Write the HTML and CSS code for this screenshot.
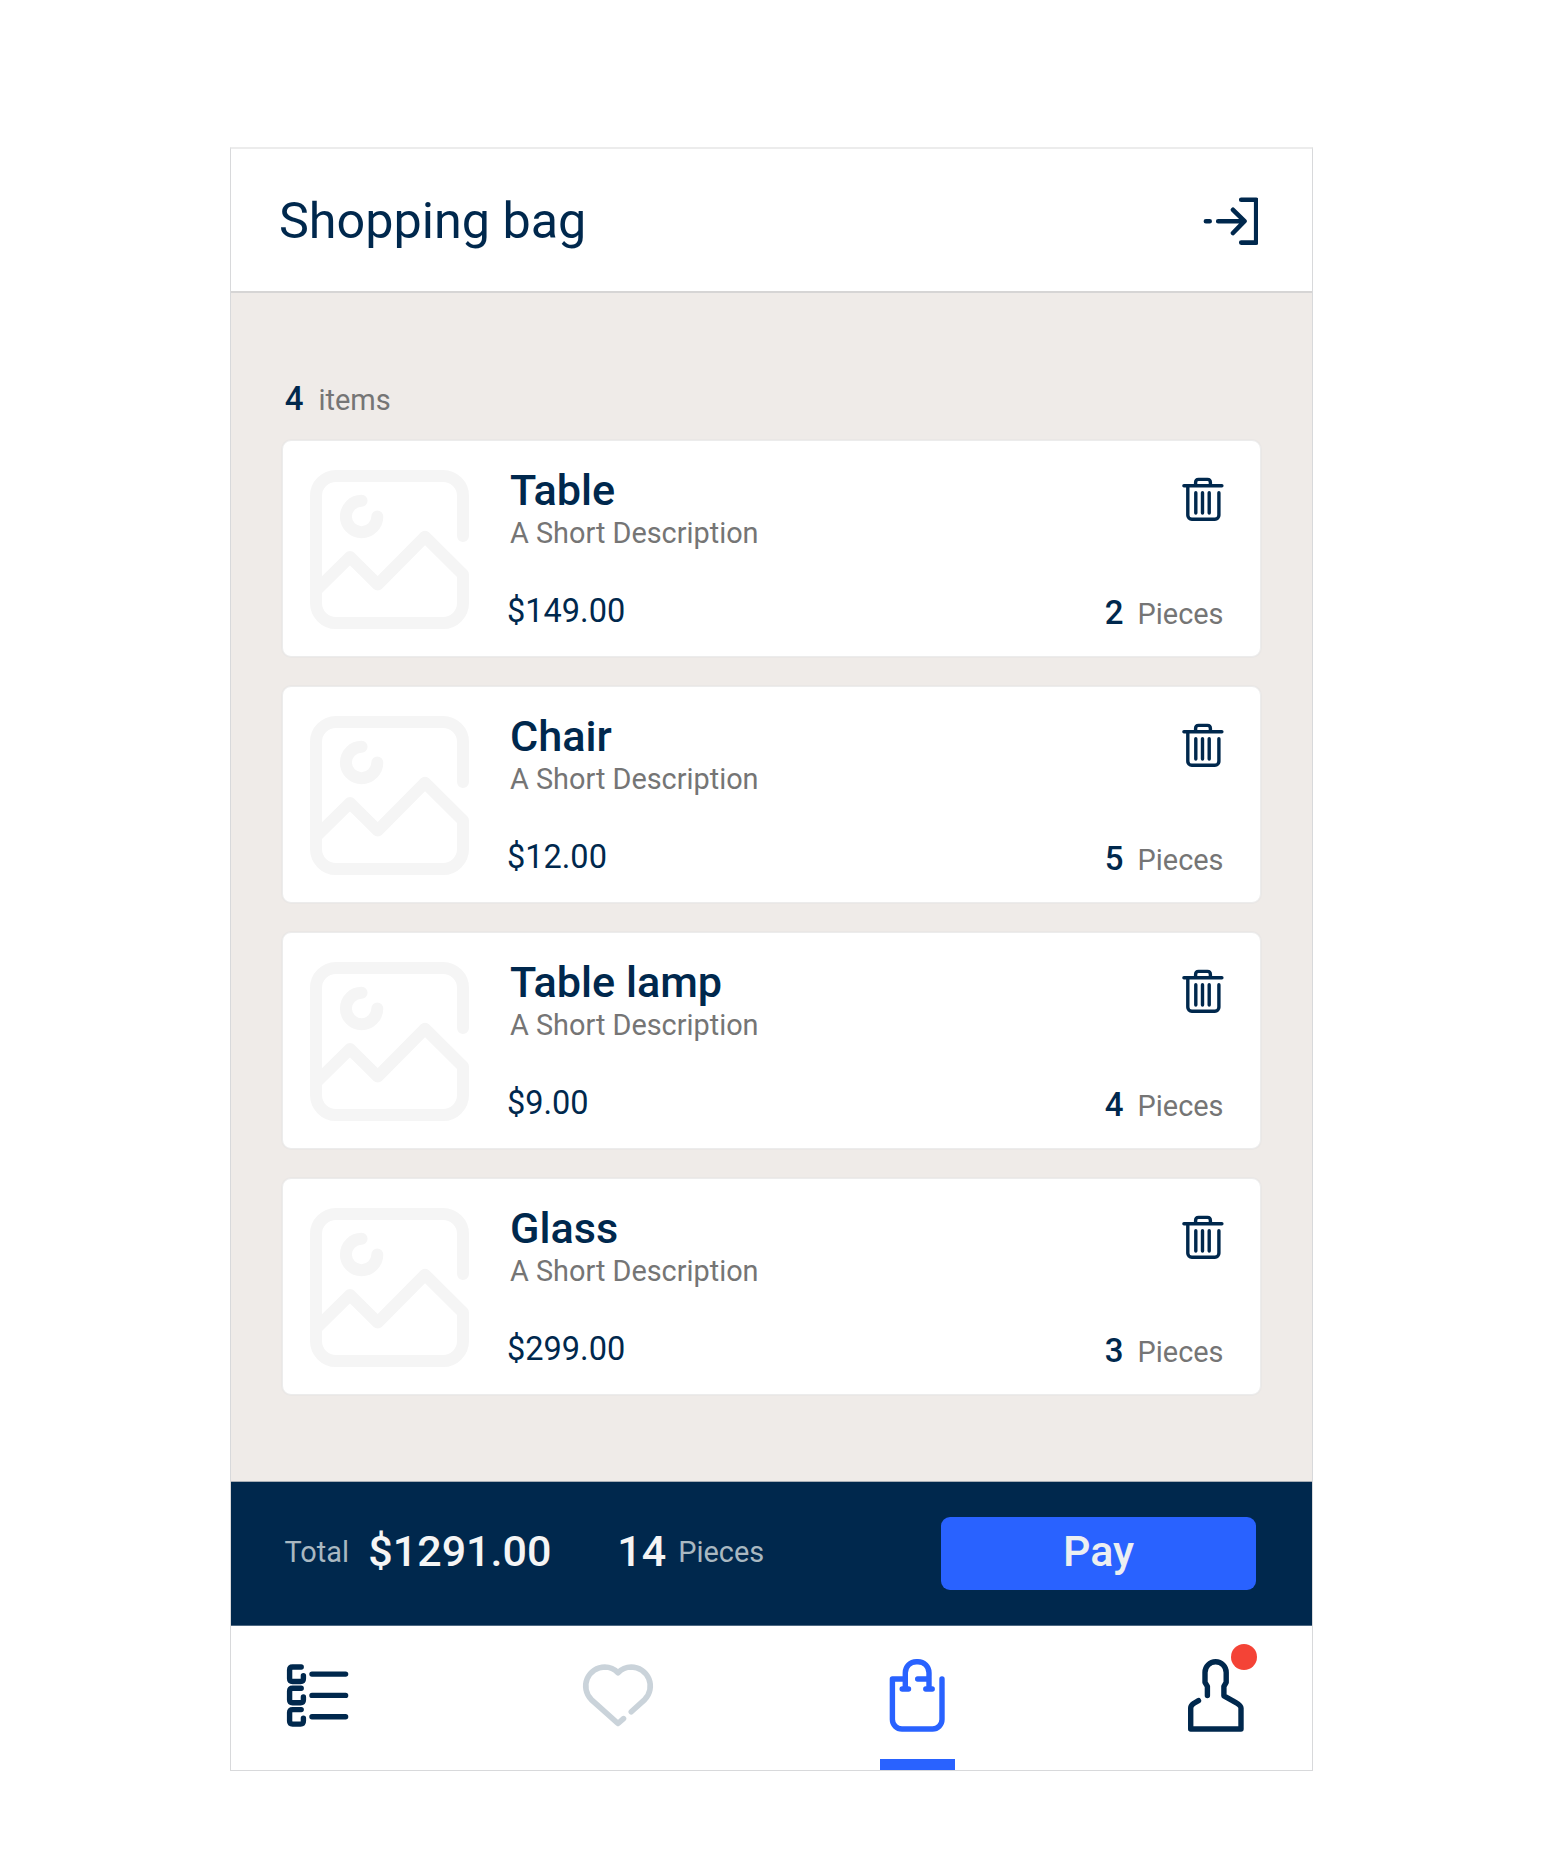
FILE: index.html
```
<!DOCTYPE html>
<html lang="en">
<head>
<meta charset="utf-8">
<title>Shopping bag</title>
<link rel="stylesheet" href="styles.css">
</head>
<body>
<svg class="sprite" aria-hidden="true">
  <symbol id="picture" viewBox="0 0 159 159"><path d="M153 66V26a20 20 0 0 0-20-20H26A20 20 0 0 0 6 26V133a20 20 0 0 0 20 20H133a20 20 0 0 0 20-20V104.500L115 66.700L67.700 114.500L40 87L7 119.500M51.600 30.800A15.700 15.700 0 1 0 67.300 46.500"/></symbol>
  <symbol id="trash" viewBox="0 0 42 44"><path d="M1.900 8.700H39.900M13.600 8.500V5.400q0-3 3-3h8.800q3 0 3 3V8.500M5.800 9V38.300a4 4 0 0 0 4 4H32.900a4 4 0 0 0 4-4V15.800M13.800 15.800V36M20.500 15.800V36M27.200 15.800V36"/></symbol>
</svg>
<main class="screen">
  <header class="header">
    <h1 class="title">Shopping bag</h1>
    <svg class="exit" viewBox="0 0 56 48"><path d="M3.900 24.200H7.700M16.200 24.200H42.100M31 12.800L42.500 24.200L31 36M39.200 2.800H54.200V45.600H39.200"/></svg>
  </header>
  <section class="content">
    <div class="summary"><span class="num">4</span><span class="unit">items</span></div>
    <div class="list">
      <article class="card">
        <svg class="picture"><use href="#picture"/></svg>
        <div class="info"><h2 class="name">Table</h2><p class="desc">A Short Description</p><p class="price">$149.00</p></div>
        <div class="side"><svg class="trash"><use href="#trash"/></svg><div class="qty"><span class="num">2</span><span class="unit">Pieces</span></div></div>
      </article>
      <article class="card">
        <svg class="picture"><use href="#picture"/></svg>
        <div class="info"><h2 class="name">Chair</h2><p class="desc">A Short Description</p><p class="price">$12.00</p></div>
        <div class="side"><svg class="trash"><use href="#trash"/></svg><div class="qty"><span class="num">5</span><span class="unit">Pieces</span></div></div>
      </article>
      <article class="card">
        <svg class="picture"><use href="#picture"/></svg>
        <div class="info"><h2 class="name">Table lamp</h2><p class="desc">A Short Description</p><p class="price">$9.00</p></div>
        <div class="side"><svg class="trash"><use href="#trash"/></svg><div class="qty"><span class="num">4</span><span class="unit">Pieces</span></div></div>
      </article>
      <article class="card">
        <svg class="picture"><use href="#picture"/></svg>
        <div class="info"><h2 class="name">Glass</h2><p class="desc">A Short Description</p><p class="price">$299.00</p></div>
        <div class="side"><svg class="trash"><use href="#trash"/></svg><div class="qty"><span class="num">3</span><span class="unit">Pieces</span></div></div>
      </article>
    </div>
  </section>
  <section class="checkout">
    <span class="label">Total</span>
    <span class="amount">$1291.00</span>
    <span class="count">14</span>
    <span class="label">Pieces</span>
    <button class="pay">Pay</button>
  </section>
  <nav class="nav">
    <a class="tab"><svg class="icon icon-list" viewBox="0 0 100 90">
      <path d="M31.200 17H22.600q-3 0-3 3V28.500q0 3 3 3H30.600q2.800 0 2.800-3V25.600M42 24.100H75.600M31.200 38.300H22.600q-3 0-3 3V49.800q0 3 3 3H30.600q2.800 0 2.800-3V46.900M42 45.400H75.600M31.200 59.600H22.600q-3 0-3 3V71.100q0 3 3 3H30.600q2.800 0 2.800-3V68.200M42 66.700H75.600"/></svg></a>
    <a class="tab"><svg class="icon icon-heart" viewBox="0 0 100 90">
      <path d="M61.300 61.800L74.700 49.600A19.100 19.100 0 0 0 61.200 17A19.100 19.100 0 0 0 48 22.700A19.100 19.100 0 0 0 34.800 17A19.100 19.100 0 0 0 21.300 49.600L48 73.500L53.500 68.700"/></svg></a>
    <a class="tab active"><svg class="icon icon-bag" viewBox="0 0 100 90">
      <path d="M35.300 29H22.400V69.500a9.500 9.500 0 0 0 9.500 9.500H62.500a9.500 9.500 0 0 0 9.500-9.500V29M32.200 39H38.500M35.300 39V22.700a11 11 0 0 1 11-11H48a11 11 0 0 1 11 11V39M55.800 39H62.200M47.700 29H59"/></svg></a>
    <a class="tab"><svg class="icon icon-user" viewBox="0 0 100 90">
      <path d="M37.400 45.500V36.300L35 32.300V22.400a10.600 10.600 0 0 1 21.200 0V32.300L53.900 36.300V45.800L65.500 52.300Q71 55.500 71 58V79H20.700V58Q20.700 55.600 24 53.300L28.500 50.600"/></svg><span class="dot"></span></a>
  </nav>
</main>
</body>
</html>
```
FILE: styles.css
```
* { box-sizing: border-box; margin: 0; }
body { background: #fff; font-family: Roboto, sans-serif; color: #00284d; padding: 147px 0 0 230px; }
.sprite { display: none; }
svg { display: block; flex: none; fill: none; stroke: currentColor; stroke-linecap: round; stroke-linejoin: round; }
.screen { width: 1083px; height: 1624px; border: 1px solid #d8d9db; border-top: 2px solid #ececec; display: flex; flex-direction: column; }
.header { height: 144px; border-bottom: 2px solid #d6d5d5; display: flex; align-items: center; justify-content: space-between; padding: 2px 54.300px 0 48px; }
.title { font-size: 50.300px; font-weight: 400; line-height: 60px; }
.exit { width: 56px; height: 48px; stroke-width: 4.600px; }
.content { height: 1188px; background: #efebe8; padding: 86px 51px 0; }
.summary { display: flex; align-items: baseline; gap: 15px; height: 40px; line-height: 40px; padding-left: 2.700px; margin-bottom: 21px; }
.num { font-size: 33px; font-weight: 500; }
.unit { font-size: 29px; color: #757575; }
.list { display: flex; flex-direction: column; gap: 29px; }
.card { height: 217px; background: #fff; border: 1px solid #ececec; box-shadow: 0 0 0 1px #eae7e5; border-radius: 9px; display: flex; padding: 0 36px 0 27px; }
.picture { width: 159px; height: 159px; margin-top: 29px; color: #f5f5f5; stroke-width: 12px; }
.info { flex: 1; padding: 25px 0 0 41px; }
.name { font-size: 43.200px; font-weight: 500; line-height: 50px; }
.desc { font-size: 28.850px; line-height: 34px; color: #757575; }
.price { font-size: 32.500px; line-height: 38px; margin: 42px 0 0 -3px; }
.side { display: flex; flex-direction: column; align-items: flex-end; }
.trash { width: 42px; height: 44px; margin: 36.300px 0 0; stroke-width: 3.400px; }
.qty { display: flex; align-items: baseline; gap: 14px; line-height: 40px; margin: 71.700px .5px 0 0; }
.qty .unit { font-size: 28.900px; }
.checkout { height: 145px; background: #00284d; border-top: 1px solid #a7aeb6; border-bottom: 1px solid #4d6882; display: flex; align-items: center; padding: 0 56px 4px 53.500px; }
.label { font-size: 28.900px; font-weight: 400; color: #a9b8c1; line-height: 34px; }
.amount, .count { font-size: 43px; font-weight: 500; color: #f5f5f5; line-height: 50px; padding-bottom: 2px; }
.amount { margin-left: 19.300px; }
.count { margin: 0 12px 0 66px; }
.pay { width: 315px; height: 73px; margin: 4px 0 0 auto; border: 0; border-radius: 9px; background: #2962ff; color: #eceff1; font: 500 43px/66px Roboto, sans-serif; padding: 0 0 6px; }
.nav { flex: 1; display: flex; justify-content: space-between; padding: 24px 42px 0 39px; }
.tab { position: relative; width: 100px; }
.icon { width: 100px; height: 90px; stroke-width: 5.400px; overflow: visible; }
.icon-heart { color: #cad3da; stroke-width: 5.600px; }
.active { color: #2962ff; }
.active::after { content: ""; position: absolute; left: 10px; bottom: 0; width: 75px; height: 11px; background: currentColor; }
.dot { position: absolute; left: 60.500px; top: -6px; width: 26px; height: 26px; border-radius: 50%; background: #f44336; }
```
